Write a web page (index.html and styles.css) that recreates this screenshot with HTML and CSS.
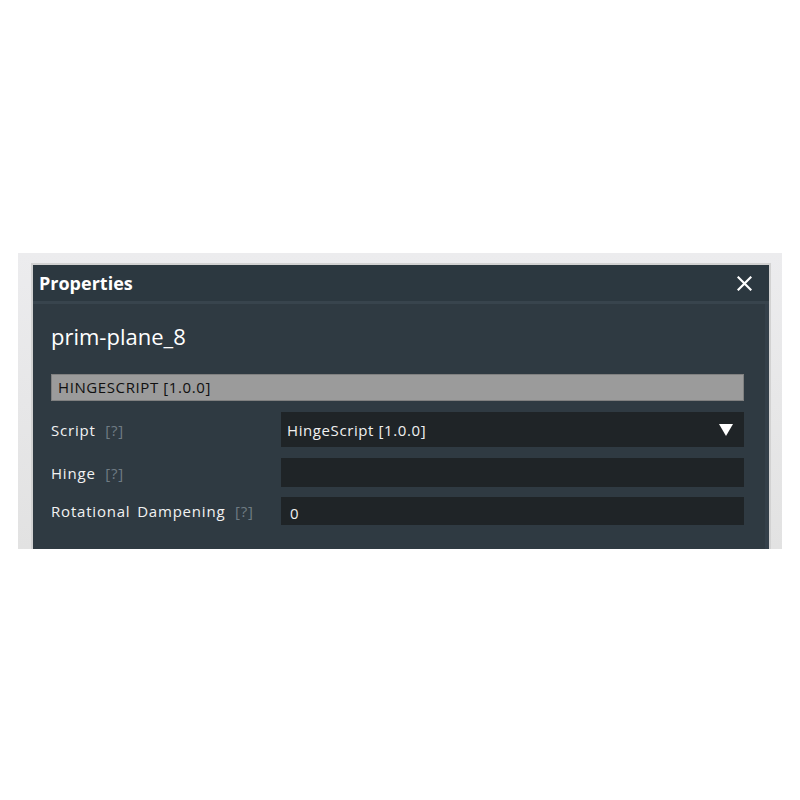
FILE: index.html
```html
<!DOCTYPE html>
<html>
<head>
<meta charset="utf-8">
<link rel="stylesheet" href="styles.css">
</head>
<body>
<div class="frame">
  <div class="panel">
    <div class="header">
      <span class="title">Properties</span>
      <svg class="close" width="15" height="15" viewBox="0 0 15 15"><path d="M1.5 1.5 L13.5 13.5 M13.5 1.5 L1.5 13.5" stroke="#fff" stroke-width="2.2" stroke-linecap="square"/></svg>
    </div>
    <div class="body">
      <div class="objname">prim-plane_8</div>
      <div class="section">HINGESCRIPT [1.0.0]</div>
      <div class="row row-script">
        <div class="label">Script <span class="help">[?]</span></div>
        <div class="input select"><span>HingeScript [1.0.0]</span><svg width="14" height="12" viewBox="0 0 14 12"><path d="M0 0 H14 L7 12 Z" fill="#fff"/></svg></div>
      </div>
      <div class="row row-hinge">
        <div class="label">Hinge <span class="help">[?]</span></div>
        <div class="input"></div>
      </div>
      <div class="row row-rd">
        <div class="label">Rotational Dampening <span class="help">[?]</span></div>
        <div class="input num">0</div>
      </div>
    </div>
  </div>
</div>
</body>
</html>
```

FILE: styles.css
```css
html, body { margin: 0; padding: 0; background: #ffffff; }
body { padding-top: 253px; font-family: "Open Sans", "Noto Sans", sans-serif; }
.frame {
  margin-left: 18px;
  width: 764px;
  height: 296px;
  box-sizing: border-box;
  padding: 12px 13px 0 15px;
  background: linear-gradient(to bottom, #ececee 0%, #e2e2e2 100%);
  display: flex;
}
.panel {
  flex: 1;
  display: flex;
  flex-direction: column;
  background: #2f3a42;
  box-shadow: 0 0 0 2px #d2d2d2;
}
.header {
  height: 36px;
  background: #2c3840;
  border-bottom: 3px solid #38444d;
  display: flex;
  align-items: center;
  justify-content: space-between;
  padding: 0 17px 0 6px;
}
.title { color: #fff; font-weight: 700; font-size: 18px; }
.close { display: block; }
.body {
  flex: 1;
  padding: 0 21px 0 18px;
  border-right: 4px solid #34404a;
}
.objname { color: #fff; font-size: 22px; height: 70px; line-height: 64px; }
.section {
  height: 27px;
  box-sizing: border-box;
  background: #9b9b9b;
  border: 1px solid #808080;
  color: #101010;
  font-size: 15px;
  font-weight: 500;
  line-height: 25px;
  padding-left: 6px;
  letter-spacing: 0.6px;
}
.row { display: flex; align-items: center; }
.label { width: 230px; color: #f2f2f2; font-size: 15px; font-weight: 500; letter-spacing: 0.8px; word-spacing: 2px; }
.help { color: #6f7c84; margin-left: 3px; font-weight: 400; }
.input { flex: 1; background: #1f2427; color: #f0f0f0; font-size: 15px; letter-spacing: 0.6px; box-sizing: border-box; padding-left: 6px; display: flex; align-items: center; }
.row-script { margin-top: 11px; }
.row-script .input { height: 35px; justify-content: space-between; padding-right: 11px; }
.row-hinge { margin-top: 11px; }
.row-hinge .input { height: 29px; }
.row-rd { margin-top: 10px; }
.row-rd .input { height: 28px; padding-left: 9px; padding-top: 4px; }
```
